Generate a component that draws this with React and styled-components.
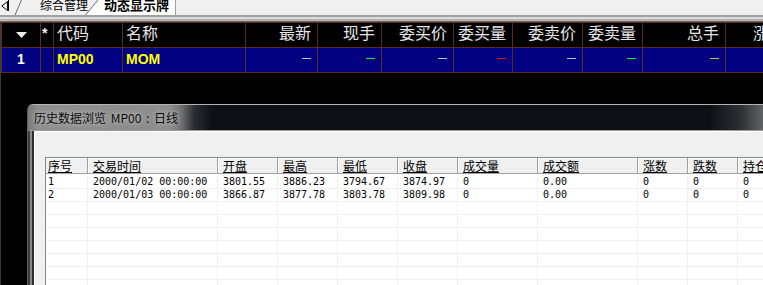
import React from 'react';
import styled, { createGlobalStyle } from 'styled-components';

const BROWN = '#5a2d1b';

const GlobalStyle = createGlobalStyle`
  html, body {
    margin: 0;
    padding: 0;
    background: #000;
    overflow: hidden;
  }
`;

const Screen = styled.div`
  width: 763px;
  height: 285px;
  overflow: hidden;
  display: flex;
  flex-direction: column;
  background: #000;
  font-family: "Noto Sans CJK SC", "Liberation Sans", sans-serif;
`;

/* ---------- tab strip ---------- */

const TabBar = styled.div`
  flex: none;
  height: 15px;
  display: flex;
  align-items: flex-start;
  background: #f0f0f0;
  overflow: hidden;
`;

const ScrollButton = styled.div`
  flex: none;
  width: 8px;
  height: 11px;
  border-right: 1px solid #000;
  display: flex;
  align-items: center;
  justify-content: center;
`;

const Slant = styled.svg`
  flex: none;
  display: block;
  margin-left: ${(p) => p.$offset || 0}px;
`;

const TabLabel = styled.div`
  flex: none;
  margin-left: ${(p) => p.$offset || 0}px;
  font-size: ${(p) => (p.$active ? 13 : 12)}px;
  font-weight: ${(p) => (p.$active ? 700 : 400)};
  line-height: 13px;
  margin-top: -2px;
  color: #000;
  white-space: nowrap;
`;

const ActiveTab = styled.div`
  flex: none;
  display: flex;
  margin-left: -3px;
  height: 15px;
`;

const ActiveBody = styled.div`
  height: 15px;
  padding: 0 6px;
  background: #fff;
  border-right: 1px solid #a0a0a0;
`;

const TabRule = styled.div`
  flex: none;
  height: 7px;
  background: linear-gradient(
    to bottom,
    #a0a0a0 0 2px,
    #dcdcdc 2px 4px,
    #b4b4b4 4px 6px,
    #6a6a6a 6px 7px
  );
`;

/* ---------- quote board ---------- */

const Board = styled.div`
  flex: 1;
  min-height: 0;
  display: flex;
  flex-direction: column;
  align-items: flex-start;
  border-left: 1px solid #3a3a3a;
  background: #000;
`;

const QuoteGrid = styled.div`
  flex: none;
  display: grid;
  grid-template-columns: 39px 13px 69px 123px 72px 64px 72px 59px 70px 60px 83px 66px;
  border-top: 1px solid ${BROWN};
  border-left: 1px solid ${BROWN};
`;

const QuoteCell = styled.div`
  box-sizing: border-box;
  height: 25px;
  border-right: 1px solid ${BROWN};
  border-bottom: 1px solid ${BROWN};
  background: ${(p) => (p.$row ? '#000080' : '#000')};
  display: flex;
  justify-content: ${(p) =>
    p.$align === 'right' ? 'flex-end' : p.$align === 'center' ? 'center' : 'flex-start'};
  align-items: ${(p) => (p.$middle ? 'center' : 'flex-start')};
  padding: ${(p) => (p.$align === 'right' ? '0 6px 0 0' : p.$align === 'center' ? '0' : '0 0 0 3px')};
  white-space: nowrap;
`;

const HeadText = styled.span`
  font-size: 16px;
  line-height: 20px;
  margin-top: -1px;
  color: #e6e6e6;
`;

const Star = styled.span`
  font-family: "Liberation Sans", Arial, sans-serif;
  font-size: 14px;
  font-weight: 700;
  line-height: 14px;
  padding-top: 3px;
  margin-left: -2px;
  color: #f0f0f0;
`;

const CellValue = styled.span`
  font-family: "Liberation Sans", Arial, sans-serif;
  font-size: 14px;
  font-weight: 700;
  line-height: 23px;
  color: ${(p) => p.$color || '#fff'};
`;

const Dash = styled.span`
  display: block;
  width: 9px;
  height: 1px;
  margin-top: 10px;
  background: ${(p) => p.$color};
`;

/* ---------- history dialog ---------- */

const Dialog = styled.div`
  flex: 1;
  width: 780px;
  margin: 31px 0 0 26px;
  display: flex;
  flex-direction: column;
  border-top: 1px solid #b4b4b4;
  border-left: 1px solid #5e5e5e;
  border-top-left-radius: 6px;
  overflow: hidden;
  background: #4a4a4a;
`;

const TitleBar = styled.div`
  flex: none;
  height: 25px;
  padding-left: 6px;
  display: flex;
  align-items: center;
  border-bottom: 1px solid #9a9a9a;
  background: linear-gradient(
    to right,
    #7a7a7a 0px,
    #8e8e8e 10px,
    #8e8e8e 142px,
    #6e6e6e 154px,
    #2a2e34 166px,
    #0d1117 184px,
    #0d1117 682px,
    #2c2e32 712px,
    #6e6e6e 740px
  );
`;

const TitleText = styled.span`
  font-size: 12px;
  line-height: 25px;
  word-spacing: 2px;
  color: #0a0a0a;
  white-space: pre;
  text-shadow: 0 0 4px rgba(220, 220, 220, 0.7), 0 0 9px rgba(200, 200, 200, 0.6);
`;

const DialogBody = styled.div`
  flex: 1;
  display: flex;
  min-height: 0;
`;

const Frame = styled.div`
  flex: none;
  width: 6px;
  background: linear-gradient(to right, #3c3c3c 0 2px, #8a8a8a 2px 4px, #2e2e2e 4px 6px);
`;

const Client = styled.div`
  flex: 1;
  min-width: 0;
  padding: 25px 0 0 10px;
  background: #f0f0f0;
  border-top: 1px solid #fff;
  border-left: 1px solid #fff;
  overflow: hidden;
`;

const ListView = styled.div`
  width: max-content;
  background: #fff;
  border-top: 1px solid #828790;
  border-left: 1px solid #828790;
`;

const listColumns = '42px 130px 60px 60px 60px 60px 80px 100px 50px 50px 70px';

const ListHeader = styled.div`
  display: grid;
  grid-template-columns: ${listColumns};
`;

const ListHeadCell = styled.div`
  box-sizing: border-box;
  height: 16px;
  padding-left: ${(p) => (p.$first ? 2 : 5)}px;
  background: #f0f0f0;
  border-right: 1px solid #a0a0a0;
  border-bottom: 1px solid #a0a0a0;
  box-shadow: inset ${(p) => (p.$first ? 0 : 1)}px 1px 0 #fff;
  font-size: 12px;
  line-height: 15px;
  color: #000;
  text-decoration: underline;
  text-underline-offset: 1px;
  white-space: nowrap;
`;

const ListBody = styled.div`
  padding-top: 2px;
`;

const ListRow = styled.div`
  display: grid;
  grid-template-columns: ${listColumns};
`;

const ListCell = styled.div`
  box-sizing: border-box;
  height: 13px;
  padding-left: ${(p) => (p.$first ? 2 : 5)}px;
  border-right: 1px solid #f0f0f0;
  border-bottom: 1px solid #f0f0f0;
  font-family: "DejaVu Sans Mono", "Liberation Mono", monospace;
  font-size: 10px;
  line-height: 12px;
  color: #000;
  white-space: pre;
`;

const quoteHead = [
  { key: 'arrow', align: 'center' },
  { key: 'star', align: 'left' },
  { key: 'code', label: '代码', align: 'left' },
  { key: 'name', label: '名称', align: 'left' },
  { key: 'last', label: '最新', align: 'right' },
  { key: 'vol', label: '现手', align: 'right' },
  { key: 'bid', label: '委买价', align: 'right' },
  { key: 'bidv', label: '委买量', align: 'right' },
  { key: 'ask', label: '委卖价', align: 'right' },
  { key: 'askv', label: '委卖量', align: 'right' },
  { key: 'total', label: '总手', align: 'right' },
  { key: 'chg', label: '涨跌', align: 'right' },
];

const dashColors = {
  last: '#c0c0c0',
  vol: '#00ff00',
  bid: '#c0c0c0',
  bidv: '#ff0000',
  ask: '#c0c0c0',
  askv: '#00ff00',
  total: '#c8c800',
};

const listHead = ['序号', '交易时间', '开盘', '最高', '最低', '收盘', '成交量', '成交额', '涨数', '跌数', '持仓'];

const listRows = [
  ['1', '2000/01/02 00:00:00', '3801.55', '3886.23', '3794.67', '3874.97', '0', '0.00', '0', '0', '0'],
  ['2', '2000/01/03 00:00:00', '3866.87', '3877.78', '3803.78', '3809.98', '0', '0.00', '0', '0', '0'],
];

function QuoteBoard() {
  return (
    <QuoteGrid>
      {quoteHead.map((col) => (
        <QuoteCell key={col.key} $align={col.align} $middle={col.key === 'arrow'}>
          {col.key === 'arrow' && (
            <svg width="11" height="6" viewBox="0 0 11 6">
              <polygon points="0,0 11,0 5.5,6" fill="#f0f0f0" />
            </svg>
          )}
          {col.key === 'star' && <Star>*</Star>}
          {col.label && <HeadText>{col.label}</HeadText>}
        </QuoteCell>
      ))}
      {quoteHead.map((col) => (
        <QuoteCell key={col.key} $row $align={col.align}>
          {col.key === 'arrow' && <CellValue>1</CellValue>}
          {col.key === 'code' && <CellValue $color="#ffff00">MP00</CellValue>}
          {col.key === 'name' && <CellValue $color="#ffff00">MOM</CellValue>}
          {dashColors[col.key] && <Dash $color={dashColors[col.key]} />}
        </QuoteCell>
      ))}
    </QuoteGrid>
  );
}

function HistoryList() {
  const rows = [...listRows];
  while (rows.length < 10) rows.push(listHead.map(() => ''));

  return (
    <ListView>
      <ListHeader>
        {listHead.map((h, i) => (
          <ListHeadCell key={h} $first={i === 0}>
            {h}
          </ListHeadCell>
        ))}
      </ListHeader>
      <ListBody>
        {rows.map((row, r) => (
          <ListRow key={r}>
            {row.map((v, i) => (
              <ListCell key={i} $first={i === 0}>
                {v}
              </ListCell>
            ))}
          </ListRow>
        ))}
      </ListBody>
    </ListView>
  );
}

export default function App() {
  return (
    <>
      <GlobalStyle />
      <Screen>
        <TabBar>
          <ScrollButton>
            <svg width="7" height="10" viewBox="0 0 7 10">
              <polygon points="6.5,0.5 0.8,5 6.5,9.5" fill="none" stroke="#000" strokeWidth="1" />
            </svg>
          </ScrollButton>
          <Slant $offset={5} width="8" height="15" viewBox="0 0 8 15">
            <line x1="1" y1="15" x2="7.5" y2="0" stroke="#6a6a6a" strokeWidth="1" />
          </Slant>
          <TabLabel $offset={18}>综合管理</TabLabel>
          <ActiveTab>
            <Slant width="13" height="15" viewBox="0 0 13 15">
              <polygon points="0,15 13,0 13,15" fill="#fff" />
              <line x1="0.5" y1="15" x2="13" y2="0" stroke="#6a6a6a" strokeWidth="1" />
            </Slant>
            <ActiveBody>
              <TabLabel $active>动态显示牌</TabLabel>
            </ActiveBody>
          </ActiveTab>
        </TabBar>
        <TabRule />
        <Board>
          <QuoteBoard />
          <Dialog>
            <TitleBar>
              <TitleText>历史数据浏览 MP00 : 日线</TitleText>
            </TitleBar>
            <DialogBody>
              <Frame />
              <Client>
                <HistoryList />
              </Client>
            </DialogBody>
          </Dialog>
        </Board>
      </Screen>
    </>
  );
}
